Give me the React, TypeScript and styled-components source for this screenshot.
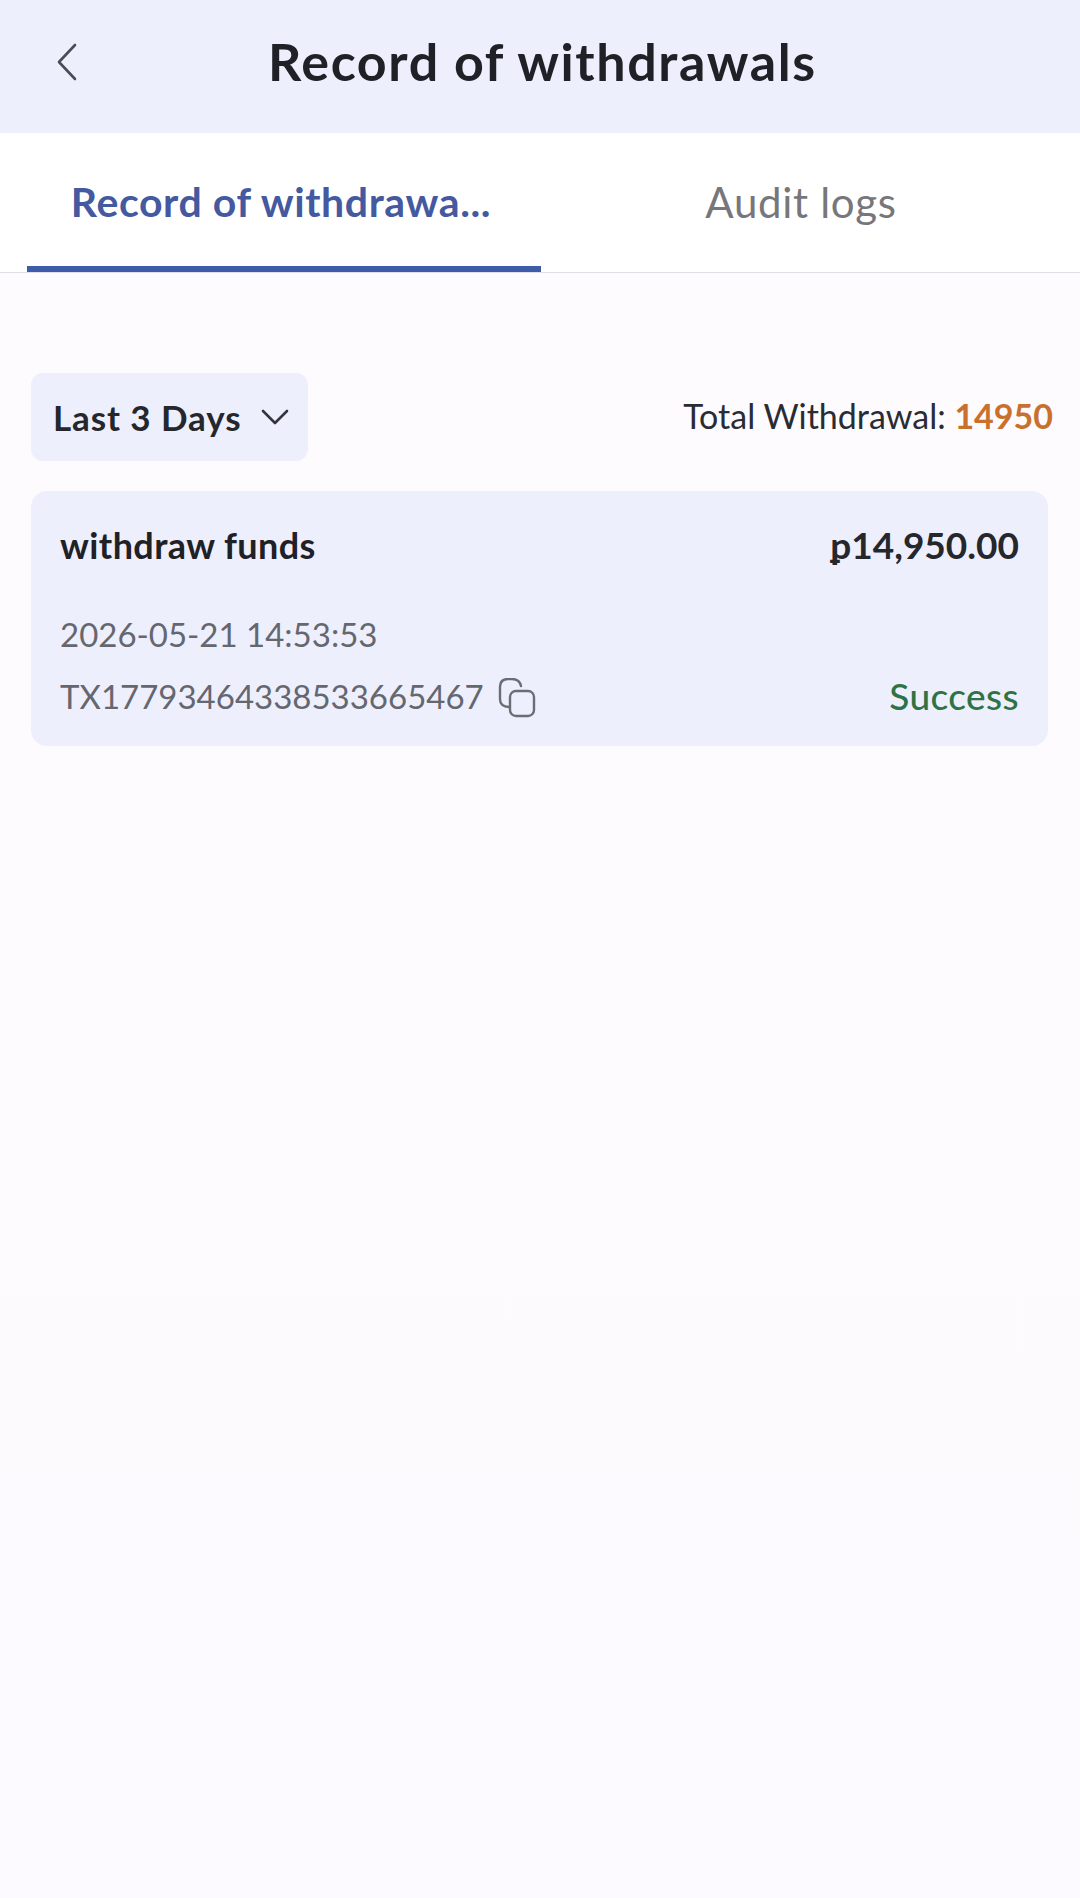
import React from "react";
import styled, { createGlobalStyle } from "styled-components";

const GlobalStyle = createGlobalStyle`
  html, body {
    margin: 0;
    padding: 0;
    background: #fdfaff;
    font-family: "Lato", "Noto Sans", sans-serif;
  }
  * { box-sizing: border-box; }
`;

const Page = styled.div`
  width: 1080px;
  min-height: 1898px;
  background: linear-gradient(180deg, #fefbfe 0%, #fdfaff 100%);
`;

const Header = styled.header`
  height: 133px;
  background: #eeeffd;
  display: flex;
  align-items: center;
  padding: 0 0 10px 56px;
`;

const BackButton = styled.button`
  width: 22px;
  height: 38px;
  padding: 0;
  border: 0;
  background: none;
  color: #4a4c55;
  display: flex;
`;

const Title = styled.h1`
  margin: 0 0 2px 190px;
  font-size: 52px;
  line-height: 60px;
  letter-spacing: 1.6px;
  font-weight: 700;
  color: #1f2126;
  white-space: nowrap;
`;

const Tabs = styled.nav`
  height: 140px;
  background: #fff;
  border-bottom: 1px solid #dfdfe4;
  display: flex;
  padding-left: 27px;
`;

const Tab = styled.div<{ $active?: boolean }>`
  width: ${({ $active }) => ($active ? "514px" : "520px")};
  height: 139px;
  display: flex;
  align-items: center;
  justify-content: center;
  padding: ${({ $active }) => ($active ? "4px 6px 0 0" : "0 0 2px")};
  font-size: ${({ $active }) => ($active ? "41px" : "42px")};
  letter-spacing: ${({ $active }) => ($active ? "0.6px" : "0.7px")};
  font-weight: ${({ $active }) => ($active ? 700 : 400)};
  color: ${({ $active }) => ($active ? "#44599f" : "#77777b")};
  border-bottom: ${({ $active }) => ($active ? "6px solid #3f5cab" : "none")};
  white-space: nowrap;
`;

const Content = styled.main`
  padding: 100px 32px 0 31px;
`;

const FilterRow = styled.div`
  display: flex;
  align-items: center;
  justify-content: space-between;
  margin-right: -5px;
`;

const FilterButton = styled.button`
  width: 277px;
  height: 88px;
  padding: 0 0 0 22px;
  border: 0;
  border-radius: 12px;
  background: #eeeffd;
  display: flex;
  align-items: center;
  gap: 20px;
  font-family: inherit;
  font-size: 35px;
  letter-spacing: 0.9px;
  font-weight: 700;
  color: #25272c;
`;

const TotalText = styled.div`
  margin-bottom: 4px;
  font-size: 34px;
  color: #2a2c33;
`;

const TotalValue = styled.span`
  font-weight: 700;
  color: #c8702c;
`;

const Card = styled.section`
  margin-top: 30px;
  height: 255px;
  padding: 32px 29px 0;
  border-radius: 16px;
  background: #eeeffd;
`;

const CardRow = styled.div`
  display: flex;
  align-items: center;
  justify-content: space-between;
`;

const CardTitle = styled.div`
  font-size: 36px;
  line-height: 44px;
  letter-spacing: 0.4px;
  font-weight: 700;
  color: #1f2126;
`;

const Amount = styled.div`
  font-size: 37px;
  line-height: 44px;
  font-weight: 700;
  color: #25272c;
`;

const DateText = styled.div`
  margin-top: 45px;
  font-size: 33px;
  line-height: 44px;
  color: #65676f;
`;

const OrderRow = styled(CardRow)`
  margin-top: 17px;
`;

const OrderId = styled.div`
  display: flex;
  align-items: center;
  gap: 14px;
  font-size: 33px;
  line-height: 44px;
  color: #65676f;
`;

const Status = styled.div`
  font-size: 37px;
  line-height: 44px;
  letter-spacing: 0.4px;
  font-weight: 500;
  color: #2f7344;
`;

const CopyGlyph = styled.svg`
  margin-top: 5px;
`;

const ChevronLeft = () => (
  <svg viewBox="0 0 22 38" width="22" height="38" fill="none" stroke="currentColor" strokeWidth="2.6" strokeLinecap="round" strokeLinejoin="round">
    <path d="M19 2 3 19l16 17" />
  </svg>
);

const ChevronDown = () => (
  <svg viewBox="0 0 28 16" width="28" height="16" fill="none" stroke="#33353b" strokeWidth="2.6" strokeLinecap="round" strokeLinejoin="round">
    <path d="M2 2l12 12L26 2" />
  </svg>
);

const CopyIcon = () => (
  <CopyGlyph viewBox="0 0 38 40" width="38" height="40" fill="none" stroke="#6b6d75" strokeWidth="2.4" strokeLinecap="round">
    <path d="M11 29C5 29 2 26 2 21V9c0-5 3-8 8-8h4c5 0 8 2 9 7" />
    <rect x="12" y="13" width="24" height="25" rx="6" />
  </CopyGlyph>
);

const App: React.FC = () => {
  return (
    <Page>
      <GlobalStyle />
      <Header>
        <BackButton aria-label="Back">
          <ChevronLeft />
        </BackButton>
        <Title>Record of withdrawals</Title>
      </Header>
      <Tabs>
        <Tab $active>Record of withdrawa...</Tab>
        <Tab>Audit logs</Tab>
      </Tabs>
      <Content>
        <FilterRow>
          <FilterButton>
            Last 3 Days
            <ChevronDown />
          </FilterButton>
          <TotalText>
            Total Withdrawal: <TotalValue>14950</TotalValue>
          </TotalText>
        </FilterRow>
        <Card>
          <CardRow>
            <CardTitle>withdraw funds</CardTitle>
            <Amount>ᵽ14,950.00</Amount>
          </CardRow>
          <DateText>2026-05-21 14:53:53</DateText>
          <OrderRow>
            <OrderId>
              TX17793464338533665467
              <CopyIcon />
            </OrderId>
            <Status>Success</Status>
          </OrderRow>
        </Card>
      </Content>
    </Page>
  );
};

export default App;
